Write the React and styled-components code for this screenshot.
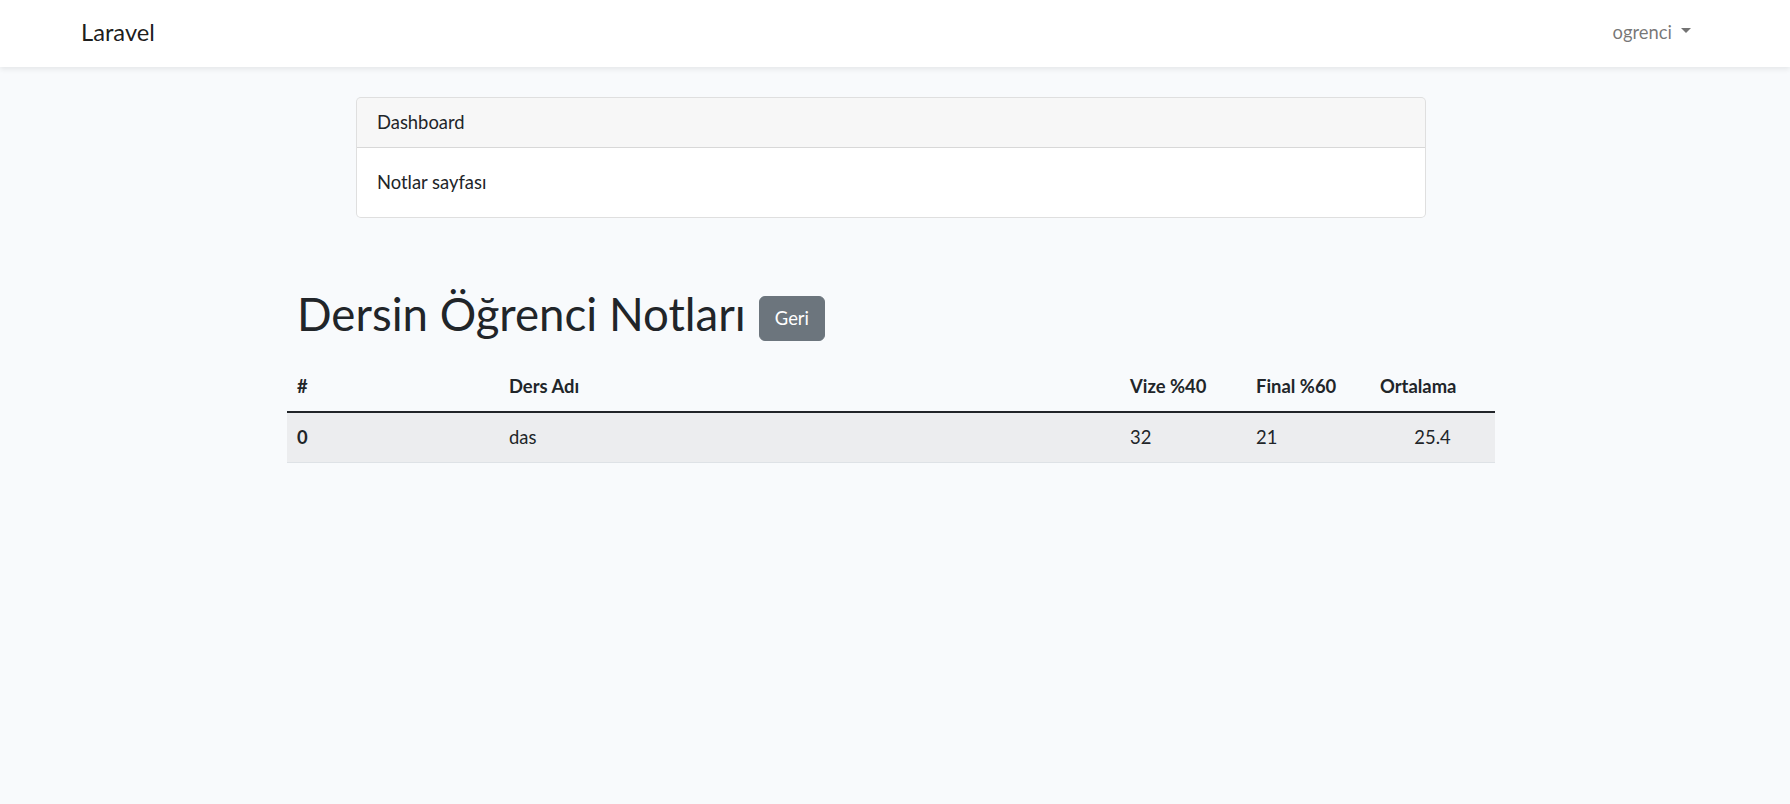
import React from 'react';
import styled, { createGlobalStyle } from 'styled-components';

const GlobalStyle = createGlobalStyle`
  *, *::before, *::after { box-sizing: border-box; }
  html, body { margin: 0; padding: 0; }
  body {
    background: #f8fafc;
    color: #212529;
    font-family: Lato, "Liberation Sans", sans-serif;
    font-size: 18.4px;
    line-height: 28.8px;
    min-height: 804px;
  }
`;

const Frame = styled.div`
  width: 100%;
  padding-right: 8px;
`;

const Navbar = styled.nav`
  background: #fff;
  box-shadow: 0 2.5px 5px rgba(0, 0, 0, 0.075);
  height: 67px;
  padding-bottom: 3px;
  display: flex;
  align-items: center;
`;

const NavContainer = styled.div`
  width: 1650px;
  margin: 0 auto;
  padding: 0 15px;
  display: flex;
  align-items: center;
  justify-content: space-between;
`;

const Brand = styled.a`
  font-size: 23.7px;
  line-height: 36px;
  color: rgba(0, 0, 0, 0.9);
  text-decoration: none;
`;

const NavLink = styled.a`
  display: flex;
  align-items: center;
  padding: 0 10px;
  color: rgba(0, 0, 0, 0.55);
  text-decoration: none;
  cursor: pointer;
`;

const Caret = styled.span`
  display: inline-block;
  margin-left: 9px;
  margin-top: -3px;
  width: 0;
  height: 0;
  border-top: 5.4px solid currentColor;
  border-left: 5.4px solid transparent;
  border-right: 5.4px solid transparent;
`;

const Main = styled.main`
  padding-top: 30px;
`;

const CardWrap = styled.div`
  width: 1070px;
  margin: 0 auto;
`;

const Card = styled.div`
  background: #fff;
  border: 1px solid rgba(0, 0, 0, 0.125);
  border-radius: 5px;
  overflow: hidden;
`;

const CardHeader = styled.div`
  background: rgba(0, 0, 0, 0.03);
  border-bottom: 1px solid rgba(0, 0, 0, 0.125);
  padding: 10px 20px;
`;

const CardBody = styled.div`
  padding: 20px;
`;

const Section = styled.section`
  width: 1208px;
  margin: 69px auto 0;
`;

const TitleRow = styled.div`
  display: flex;
  align-items: flex-start;
  gap: 13px;
  padding-left: 10px;
  margin-bottom: 21px;
`;

const Title = styled.h1`
  margin: 0;
  font-size: 45.6px;
  line-height: 54px;
  font-weight: 400;
  color: #212529;
`;

const Button = styled.button`
  margin-top: 9px;
  font-family: inherit;
  font-size: 18.4px;
  line-height: 28.8px;
  padding: 7.5px 15px;
  color: #fff;
  background: #6c757d;
  border: 1px solid #6c757d;
  border-radius: 6px;
  cursor: pointer;
`;

const Table = styled.table`
  width: 100%;
  table-layout: fixed;
  border-collapse: collapse;
`;

const HeadCell = styled.th`
  text-align: ${(p) => p.$align || 'left'};
  font-weight: 700;
  padding: 10px;
  border-bottom: 2px solid #212529;
`;

const RowHead = styled.th`
  text-align: left;
  font-weight: 700;
  padding: 10px;
`;

const Cell = styled.td`
  text-align: ${(p) => p.$align || 'left'};
  padding: 10px;
`;

const BodyRow = styled.tr`
  background: ${(p) => (p.$striped ? '#ecedef' : 'transparent')};
  border-bottom: 1px solid #dee2e6;
`;

const columns = [212, 621, 126, 124, 125];

const rows = [{ id: 0, name: 'das', vize: 32, final: 21, avg: 25.4 }];

export default function App() {
  return (
    <>
      <GlobalStyle />
      <Navbar>
        <Frame>
          <NavContainer>
            <Brand href="#">Laravel</Brand>
            <NavLink>
              ogrenci
              <Caret />
            </NavLink>
          </NavContainer>
        </Frame>
      </Navbar>
      <Frame>
        <Main>
          <CardWrap>
            <Card>
              <CardHeader>Dashboard</CardHeader>
              <CardBody>Notlar sayfası</CardBody>
            </Card>
          </CardWrap>
          <Section>
            <TitleRow>
              <Title>Dersin Öğrenci Notları</Title>
              <Button>Geri</Button>
            </TitleRow>
            <Table>
              <colgroup>
                {columns.map((w, i) => (
                  <col key={i} width={w} />
                ))}
              </colgroup>
              <thead>
                <tr>
                  <HeadCell>#</HeadCell>
                  <HeadCell>Ders Adı</HeadCell>
                  <HeadCell>Vize %40</HeadCell>
                  <HeadCell>Final %60</HeadCell>
                  <HeadCell>Ortalama</HeadCell>
                </tr>
              </thead>
              <tbody>
                {rows.map((r, i) => (
                  <BodyRow key={r.id} $striped={i % 2 === 0}>
                    <RowHead>{r.id}</RowHead>
                    <Cell>{r.name}</Cell>
                    <Cell>{r.vize}</Cell>
                    <Cell>{r.final}</Cell>
                    <Cell $align="center">{r.avg}</Cell>
                  </BodyRow>
                ))}
              </tbody>
            </Table>
          </Section>
        </Main>
      </Frame>
    </>
  );
}
